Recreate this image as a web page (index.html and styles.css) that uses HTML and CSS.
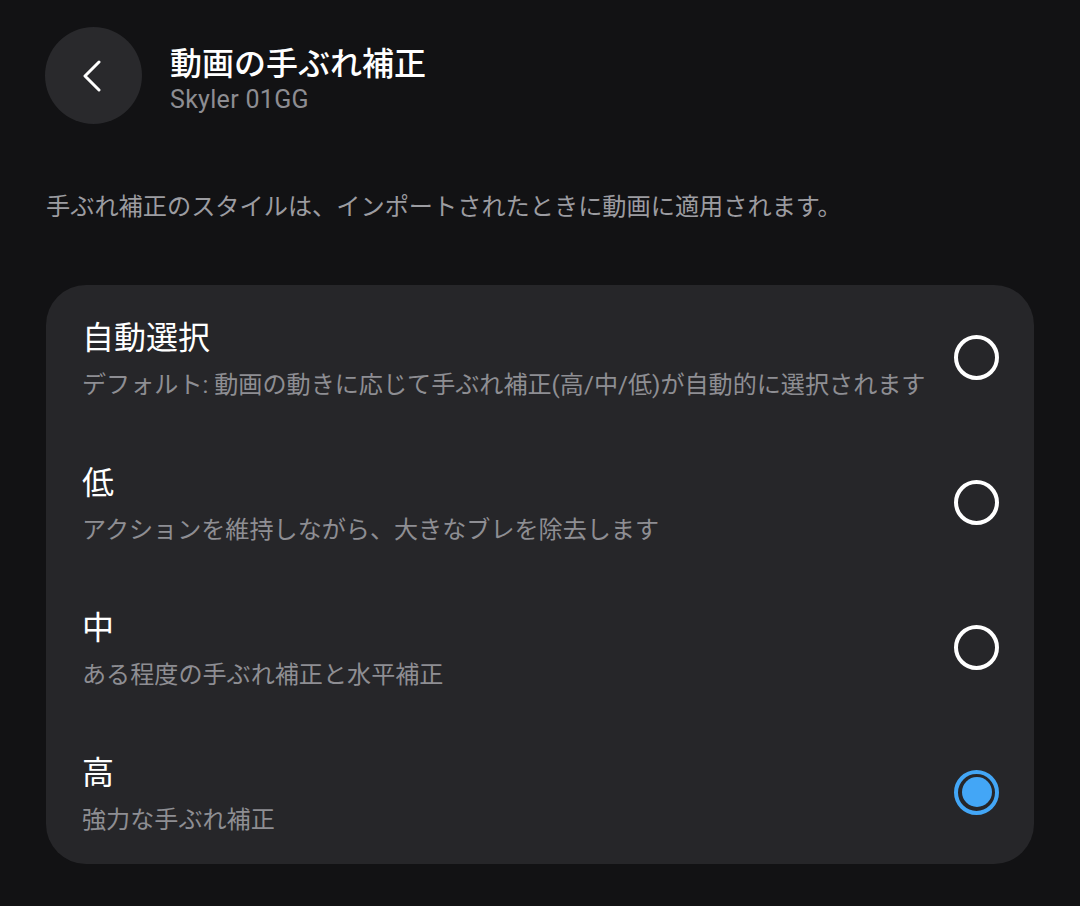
FILE: index.html
```html
<!DOCTYPE html>
<html lang="ja">
<head>
<meta charset="utf-8">
<link rel="stylesheet" href="styles.css">
</head>
<body>
<div class="page">
  <header class="header">
    <button class="back" aria-label="戻る">
      <svg width="20" height="32" viewBox="0 0 20 32"><path d="M17 2 L3 16 L17 30" fill="none" stroke="#fff" stroke-width="3" stroke-linecap="round" stroke-linejoin="round"/></svg>
    </button>
    <div class="titles">
      <div class="title">動画の手ぶれ補正</div>
      <div class="subtitle">Skyler 01GG</div>
    </div>
  </header>
  <p class="intro">手ぶれ補正のスタイルは、インポートされたときに動画に適用されます。</p>
  <div class="card">
    <div class="row">
      <div class="texts">
        <div class="opt-title">自動選択</div>
        <div class="opt-desc">デフォルト: 動画の動きに応じて手ぶれ補正(高/中/低)が自動的に選択されます</div>
      </div>
      <span class="radio"></span>
    </div>
    <div class="row">
      <div class="texts">
        <div class="opt-title">低</div>
        <div class="opt-desc">アクションを維持しながら、大きなブレを除去します</div>
      </div>
      <span class="radio"></span>
    </div>
    <div class="row">
      <div class="texts">
        <div class="opt-title">中</div>
        <div class="opt-desc">ある程度の手ぶれ補正と水平補正</div>
      </div>
      <span class="radio"></span>
    </div>
    <div class="row">
      <div class="texts">
        <div class="opt-title">高</div>
        <div class="opt-desc">強力な手ぶれ補正</div>
      </div>
      <span class="radio checked"></span>
    </div>
  </div>
</div>
</body>
</html>
```
FILE: styles.css
```css
html, body {
  margin: 0;
  padding: 0;
  background: #121214;
}
body {
  font-family: Roboto, "Noto Sans CJK JP", sans-serif;
  color: #fff;
  width: 1080px;
  height: 906px;
  overflow: hidden;
}
.page {
  padding: 27px 46px 0 45px;
}
.header {
  display: flex;
  align-items: flex-start;
  gap: 28px;
}
.back {
  width: 97px;
  height: 97px;
  border-radius: 50%;
  border: none;
  background: #29292c;
  display: flex;
  align-items: center;
  justify-content: center;
  padding: 0 4px 0 0;
  flex: none;
}
.titles {
  margin-top: 17px;
}
.title {
  font-size: 32px;
  line-height: 40px;
  font-weight: 500;
  color: #fff;
}
.subtitle {
  font-size: 25px;
  line-height: 30px;
  letter-spacing: 0.3px;
  color: #8d8d92;
  margin-top: 1px;
}
.intro {
  margin: 66px 0 0 1px;
  font-size: 24.2px;
  line-height: 34px;
  color: #9c9ca1;
}
.card {
  margin: 61px 0 0 1px;
  background: #262629;
  border-radius: 40px;
  padding: 33px 35px 25px 36px;
  display: flex;
  flex-direction: column;
  gap: 59px;
}
.row {
  display: flex;
  align-items: center;
  justify-content: space-between;
  height: 86px;
}
.opt-title {
  font-size: 32px;
  line-height: 40px;
  color: #fff;
}
.opt-desc {
  margin-top: 8px;
  font-size: 24.1px;
  line-height: 38px;
  color: #8e8e93;
  white-space: nowrap;
}
.radio {
  width: 45px;
  height: 45px;
  box-sizing: border-box;
  border: 4px solid #fff;
  border-radius: 50%;
  margin-bottom: 8px;
  flex: none;
  display: flex;
  align-items: center;
  justify-content: center;
}
.radio.checked {
  border-color: #43a6f6;
}
.radio.checked::after {
  content: "";
  width: 30px;
  height: 30px;
  border-radius: 50%;
  background: #43a6f6;
}
```
